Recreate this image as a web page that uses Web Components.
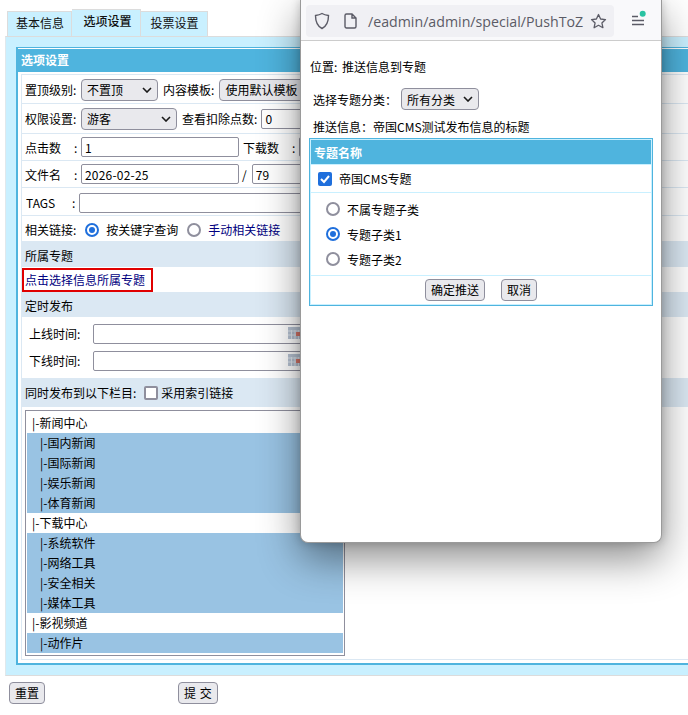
<!DOCTYPE html>
<html>
<head>
<meta charset="utf-8">
<style>
  html, body { margin: 0; height: 715px; overflow: hidden; background: #fff; }
  body { font: 12px "Noto Sans CJK SC", "Noto Sans", sans-serif; color: #000; }
  #page { position: relative; width: 688px; height: 715px; overflow: hidden; }
  .lbl { display: inline-block; }
  #pick { outline: 2px solid #e00000; line-height: 20px; padding: 0 6px 0 1px; margin-left: -1px; }
</style>
</head>
<body>
<div id="page">
  <cms-tabs>
    <span slot="tab" style="width:65px;border-left:1px solid #dcdcdc;text-indent:1px">基本信息</span>
    <span slot="tab" active>选项设置</span>
    <span slot="tab" style="text-indent:1px">投票设置</span>
    <cms-panel title="选项设置">
      <cms-row h="29" style="padding-top:1px">置顶级别:&nbsp;<cms-select w="77" style="margin-left:2px">不置顶</cms-select><span style="margin-left:5px">内容模板:</span><cms-select w="120" style="margin-left:5px">使用默认模板</cms-select></cms-row>
      <cms-row h="30">权限设置:&nbsp;<cms-select w="96" style="margin-left:2px">游客</cms-select><span style="margin-left:5px">查看扣除点数:</span><cms-input w="160" style="margin-left:4px">0</cms-input></cms-row>
      <cms-row h="27"><span class="lbl" style="width:49px">点击数</span><span class="lbl" style="width:7px">:</span><cms-input w="158">1</cms-input><span class="lbl" style="margin-left:4px;width:49px">下载数</span><span class="lbl" style="width:7px">:</span><cms-input w="100"></cms-input></cms-row>
      <cms-row h="27"><span class="lbl" style="width:49px">文件名</span><span class="lbl" style="width:7px">:</span><cms-input w="158">2026-02-25</cms-input><span style="margin:0 5px 0 3px">/</span><cms-input w="160">79</cms-input></cms-row>
      <cms-row h="28" style="padding-top:2px"><span class="lbl" style="width:46px;padding-left:1px">TAGS</span><span class="lbl" style="width:7px">:</span><cms-input w="400"></cms-input></cms-row>
      <cms-row h="26" style="padding-top:2px">相关链接:<cms-radio checked style="margin-left:9px">按关键字查询</cms-radio><cms-radio style="margin-left:9px"><span style="color:#000080">手动相关链接</span></cms-radio></cms-row>
      <cms-row h="25" band style="padding-top:2px">所属专题</cms-row>
      <cms-row h="25" flush><span id="pick" style="color:#000080">点击选择信息所属专题</span></cms-row>
      <cms-row h="25" band style="padding-top:2px">定时发布</cms-row>
      <cms-row h="61" flush>
        <div style="display:grid;grid-template-columns:64px auto;row-gap:7px;padding:7px 0 0 4px;align-self:flex-start">
          <span style="line-height:20px">上线时间:</span><cms-input w="400" cal></cms-input>
          <span style="line-height:20px">下线时间:</span><cms-input w="400" cal></cms-input>
        </div>
      </cms-row>
      <cms-row h="29" band>同时发布到以下栏目:<cms-check style="margin-left:8px">采用索引链接</cms-check></cms-row>
      <cms-list>
        <cms-opt>|-新闻中心</cms-opt>
        <cms-opt sel sub>|-国内新闻</cms-opt>
        <cms-opt sel sub>|-国际新闻</cms-opt>
        <cms-opt sel sub>|-娱乐新闻</cms-opt>
        <cms-opt sel sub>|-体育新闻</cms-opt>
        <cms-opt>|-下载中心</cms-opt>
        <cms-opt sel sub>|-系统软件</cms-opt>
        <cms-opt sel sub>|-网络工具</cms-opt>
        <cms-opt sel sub>|-安全相关</cms-opt>
        <cms-opt sel sub>|-媒体工具</cms-opt>
        <cms-opt>|-影视频道</cms-opt>
        <cms-opt sel sub>|-动作片</cms-opt>
      </cms-list>
    </cms-panel>
  </cms-tabs>
  <cms-actions></cms-actions>
  <cms-popup></cms-popup>
</div>

<script>
const CHEVRON = `<svg width="10" height="6" viewBox="0 0 10 6"><path d="M1 1l4 4 4-4" fill="none" stroke="#1a1a1a" stroke-width="1.6"/></svg>`;

class CmsTabs extends HTMLElement {
  constructor() {
    super();
    this.attachShadow({ mode: "open" });
  }
  connectedCallback() {
    this.shadowRoot.innerHTML = `<style>
  :host { display: block; padding: 9px 0 0 5px; }
  #bar { display: flex; height: 27px; padding-left: 2px; align-items: flex-end; }
  ::slotted([slot=tab]) {
    display: block; height: 25px; line-height: 21px; text-align: center; box-sizing: border-box;
    background: #c9f0ff; border: 1px solid #dcdcdc; border-bottom: 0; border-left: 0;
    width: 67px; color: #111;
  }
  ::slotted([slot=tab][active]) { height: 27px; line-height: 21px; font-weight: 500; width: 69px; text-indent: 3px; }
  #pane { background: #c9f0ff; border-top: 1px solid #dcdcdc; border-bottom: 1px solid #dcdcdc; border-left: 1px solid #e0e8ec; padding: 10px 0 12px 10px; height: 616px; box-sizing: content-box; }
</style>
<div id="bar"><slot name="tab"></slot></div>
<div id="pane"><slot></slot></div>`;
  }
}
customElements.define("cms-tabs", CmsTabs);

class CmsPanel extends HTMLElement {
  constructor() {
    super();
    this.attachShadow({ mode: "open" });
  }
  connectedCallback() {
    this.shadowRoot.innerHTML = `<style>
  :host { display: block; width: 700px; border: solid #4fb4de; border-width: 1px 0 2px 2px; background: #fff; height: 618px; box-sizing: border-box; }
  #head { height: 23px; line-height: 22px; background: #4fb4de; color: #fff; font-weight: 700; padding-left: 3px; margin-top: 1px; }
  #body { margin: 2px 0 0 3px; border: 1px solid #dbe8f3; border-right: 0; height: 586px; box-sizing: border-box; }
</style>
<div id="head">${this.getAttribute("title")}</div>
<div id="body"><slot></slot></div>`;
  }
}
customElements.define("cms-panel", CmsPanel);

class CmsRow extends HTMLElement {
  constructor() {
    super();
    this.attachShadow({ mode: "open" });
  }
  connectedCallback() {
    const h = this.getAttribute("h");
    const band = this.hasAttribute("band");
    const flush = this.hasAttribute("flush");
    this.shadowRoot.innerHTML = `<style>
  :host { display: flex; align-items: center; box-sizing: border-box; height: ${h}px; padding-left: 3px;
    background: ${band ? "#dbe8f3" : "#fff"}; white-space: nowrap;
    ${band || flush ? "" : "border-bottom: 1px solid #dbe8f3;"} }
</style><slot></slot>`;
  }
}
customElements.define("cms-row", CmsRow);

class CmsSelect extends HTMLElement {
  constructor() {
    super();
    this.attachShadow({ mode: "open" });
  }
  connectedCallback() {
    this.shadowRoot.innerHTML = `<style>
  :host { display: inline-flex; align-items: center; justify-content: space-between; box-sizing: border-box;
    width: ${this.getAttribute("w")}px; height: 22px; background: #e9e9ed; border: 1px solid #8f8f9d; border-radius: 4px;
    padding: 0 5px 0 5px; flex: none; }
</style><span><slot></slot></span>${CHEVRON}`;
  }
}
customElements.define("cms-select", CmsSelect);

class CmsInput extends HTMLElement {
  constructor() {
    super();
    this.attachShadow({ mode: "open" });
  }
  connectedCallback() {
    const cal = this.hasAttribute("cal");
    this.shadowRoot.innerHTML = `<style>
  :host { display: flex; align-items: center; box-sizing: border-box; flex: none; letter-spacing: .2px;
    width: ${this.getAttribute("w")}px; height: 20px; background: #fff; border: 1px solid #8f8f9d; border-radius: 2px; padding-left: 3px; position: relative; }
  svg { position: absolute; left: 194px; top: 2px; }
</style><slot></slot>${cal ? `<svg width="14" height="12" viewBox="0 0 14 12"><rect width="14" height="12" fill="#b6c2d2"/><path d="M0 4h14M0 8h14M3.500 3v9M7 3v9M10.500 3v9" stroke="#dfe6ee"/><rect x="8" y="5" width="4" height="4" fill="#d9776a"/></svg>` : ""}`;
  }
}
customElements.define("cms-input", CmsInput);

class CmsRadio extends HTMLElement {
  constructor() {
    super();
    this.attachShadow({ mode: "open" });
  }
  connectedCallback() {
    const on = this.hasAttribute("checked");
    this.shadowRoot.innerHTML = `<style>
  :host { display: inline-flex; align-items: center; gap: 7px; }
  i { width: 14px; height: 14px; box-sizing: border-box; border-radius: 50%; flex: none; background: #fff;
    border: ${on ? "2px solid #1f6fdc" : "2px solid #8f8f9d"}; display: flex; align-items: center; justify-content: center; }
  b { width: 6px; height: 6px; border-radius: 50%; background: #1f6fdc; }
</style><i>${on ? "<b></b>" : ""}</i><span><slot></slot></span>`;
  }
}
customElements.define("cms-radio", CmsRadio);

class CmsCheck extends HTMLElement {
  constructor() {
    super();
    this.attachShadow({ mode: "open" });
  }
  connectedCallback() {
    const on = this.hasAttribute("checked");
    this.shadowRoot.innerHTML = `<style>
  :host { display: inline-flex; align-items: center; gap: 3px; }
  i { width: 14px; height: 14px; box-sizing: border-box; border-radius: 2px; flex: none; display: flex;
    ${on ? "background: #1f6fdc;" : "background: #fff; border: 2px solid #8f8f9d;"} }
</style><i>${on ? `<svg width="14" height="14" viewBox="0 0 14 14"><path d="M3 7l3 3 5-6" fill="none" stroke="#fff" stroke-width="2"/></svg>` : ""}</i><span><slot></slot></span>`;
  }
}
customElements.define("cms-check", CmsCheck);

class CmsList extends HTMLElement {
  constructor() {
    super();
    this.attachShadow({ mode: "open" });
  }
  connectedCallback() {
    this.shadowRoot.innerHTML = `<style>
  :host { display: block; box-sizing: border-box; width: 320px; height: 246px; margin: 3px 0 0 3px; border: 1px solid #8f8f9d; padding: 2px 1px 1px; background: #fff; }
</style><slot></slot>`;
  }
}
customElements.define("cms-list", CmsList);

class CmsOpt extends HTMLElement {
  constructor() {
    super();
    this.attachShadow({ mode: "open" });
  }
  connectedCallback() {
    const sel = this.hasAttribute("sel");
    this.shadowRoot.innerHTML = `<style>
  :host { display: block; height: 20px; line-height: 20px; padding-left: ${this.hasAttribute("sub") ? 13 : 5}px; background: ${sel ? "#99c3e3" : "#fff"}; }
</style><slot></slot>`;
  }
}
customElements.define("cms-opt", CmsOpt);

class CmsButton extends HTMLElement {
  constructor() {
    super();
    this.attachShadow({ mode: "open" });
  }
  connectedCallback() {
    this.shadowRoot.innerHTML = `<style>
  :host { display: inline-block; box-sizing: border-box; height: 22px; line-height: 19px; padding: 0 5px; background: #e9e9ed; border: 1px solid #8f8f9d; border-radius: 4px; white-space: pre; word-spacing: 1px; }
</style><slot></slot>`;
  }
}
customElements.define("cms-button", CmsButton);

class CmsActions extends HTMLElement {
  constructor() {
    super();
    this.attachShadow({ mode: "open" });
  }
  connectedCallback() {
    this.shadowRoot.innerHTML = `<style>
  :host { display: flex; padding: 6px 0 0 9px; gap: 133px; }
</style><cms-button>重置</cms-button><cms-button>提 交</cms-button>`;
  }
}
customElements.define("cms-actions", CmsActions);

class CmsPopup extends HTMLElement {
  constructor() {
    super();
    this.attachShadow({ mode: "open" });
  }
  connectedCallback() {
    this.shadowRoot.innerHTML = `<style>
  :host { position: absolute; left: 300px; top: 0; width: 362px; height: 543px; box-sizing: border-box; background: #fff;
    border: 1px solid #9a9a9a; border-top: 0; border-radius: 0 0 8px 8px; box-shadow: 0 16px 40px rgba(0,0,0,.45), 0 0 10px rgba(0,0,0,.2); }
  #bar { height: 41px; box-sizing: border-box; border-bottom: 1px solid #ccc; padding: 5px 0 0 5px; display: flex; position: relative; background: #f9f9fb; }
  #url { width: 308px; height: 32px; background: #f0f0f4; border-radius: 4px; display: flex; align-items: center; padding-left: 8px; box-sizing: border-box; color: #5b5b66; }
  #url span { font: 14.2px "Open Sans", sans-serif; margin-left: 11px; white-space: nowrap; width: 216px; }
  #url svg { flex: none; }
  #url svg + svg { margin-left: 14px; }
  #url #star { margin-left: 6px; }
  #menu { position: absolute; left: 330px; top: 10px; }
  #loc { padding: 18px 0 0 9px; line-height: 16px; }
  #loc span { margin-left: 2px; }
  #cat { display: flex; align-items: center; padding: 13px 0 0 12px; }
  #cat cms-select { margin-left: 4px; width: 78px; }
  #info { padding: 8px 0 0 12px; line-height: 17px; }
  #tbl { margin: 3px 0 0 8px; width: 344px; height: 168px; box-sizing: border-box; border: 1px solid #4fb4de; padding: 1px; background: #c9f0ff; }
  #th { height: 24px; line-height: 25px; background: #4fb4de; color: #fff; font-weight: 700; padding-left: 3px; margin-bottom: 1px; }
  #r1, #r2, #r3 { background: #fff; }
  #r1 { height: 28px; box-sizing: border-box; display: flex; align-items: center; padding-left: 7px; border-bottom: 1px solid #c9f0ff; }
  #r1 cms-check { gap: 7px; }
  #r2 { height: 83px; box-sizing: border-box; display: flex; flex-direction: column; justify-content: center; gap: 8px; padding-left: 15px; border-bottom: 1px solid #c9f0ff; }
  #r2 cms-radio { gap: 7px; height: 17px; }
  #r3 { display: flex; justify-content: center; gap: 16px; padding-top: 3px; height: 28px; box-sizing: border-box; }
</style>
<div id="bar">
  <div id="url">
    <svg width="16" height="18" viewBox="0 0 16 18"><path d="M8 1.500c2 1.200 4 1.700 6.500 2 0 6-1.500 10.500-6.500 13C3 14 1.500 9.500 1.500 3.500c2.500-.3 4.500-.8 6.500-2z" fill="none" stroke="#5b5b66" stroke-width="1.400"/></svg>
    <svg width="13" height="16" viewBox="0 0 13 16"><path d="M1 2.500A1.500 1.500 0 0 1 2.500 1H8l4 4v8.500a1.500 1.500 0 0 1-1.500 1.500h-8A1.500 1.500 0 0 1 1 13.500zM8 1v4h4" fill="none" stroke="#5b5b66" stroke-width="1.400"/></svg>
    <span>/eadmin/admin/special/PushToZ</span>
    <svg id="star" width="17" height="17" viewBox="0 0 17 17"><path d="M8.500 1.500l2.100 4.500 4.900.6-3.600 3.300 1 4.800-4.400-2.400-4.400 2.400 1-4.800L1.500 6.600l4.900-.6z" fill="none" stroke="#5b5b66" stroke-width="1.300" stroke-linejoin="round"/></svg>
  </div>
  <svg id="menu" width="16" height="18" viewBox="0 0 16 18"><path d="M1 6.500h6M1 10.500h12M1 14.500h12" stroke="#5b5b66" stroke-width="1.300"/><circle cx="11.700" cy="3.700" r="3" fill="#2ac3a2"/></svg>
</div>
<div id="loc">位置:<span> 推送信息到专题</span></div>
<div id="cat">选择专题分类：<cms-select w="78">所有分类</cms-select></div>
<div id="info">推送信息：帝国CMS测试发布信息的标题</div>
<div id="tbl">
  <div id="th">专题名称</div>
  <div id="r1"><cms-check checked>帝国CMS专题</cms-check></div>
  <div id="r2">
    <cms-radio>不属专题子类</cms-radio>
    <cms-radio checked>专题子类1</cms-radio>
    <cms-radio>专题子类2</cms-radio>
  </div>
  <div id="r3"><cms-button>确定推送</cms-button><cms-button>取消</cms-button></div>
</div>`;
  }
}
customElements.define("cms-popup", CmsPopup);
</script>
</body>
</html>
